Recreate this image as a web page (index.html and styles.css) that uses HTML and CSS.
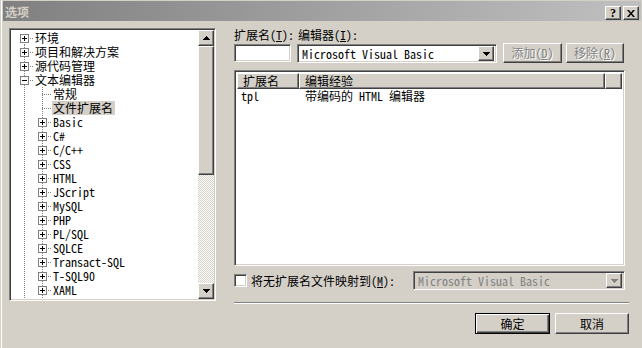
FILE: index.html
```html
<!DOCTYPE html>
<html lang="zh-CN">
<head>
  <meta charset="UTF-8" />
  <title>选项</title>
  <link rel="stylesheet" href="styles.css">
</head>
<body>
  <div class="window">
    <div class="titlebar">
      <span class="title">选项</span>
      <div class="tbtns">
        <span class="tbtn help">?</span>
        <span class="tbtn close">
          <svg width="8" height="7" viewBox="0 0 8 7"><path d="M0 0h2l2 2.4 2-2.4h2l-3 3.5 3 3.5h-2l-2-2.4-2 2.4h-2l3-3.5z"/></svg>
        </span>
      </div>
    </div>

    <div class="client">
      <div class="tree">
        <div class="tree-items">
          <div class="row"><i class="ln f"><b class="pm"></b></i><span class="lbl">环境</span></div>
          <div class="row"><i class="ln t"><b class="pm"></b></i><span class="lbl">项目和解决方案</span></div>
          <div class="row"><i class="ln t"><b class="pm"></b></i><span class="lbl">源代码管理</span></div>
          <div class="row"><i class="ln t"><b class="pm minus"></b></i><span class="lbl">文本编辑器</span></div>
          <div class="row"><i class="ln v"></i><i class="ln t"></i><span class="lbl">常规</span></div>
          <div class="row"><i class="ln v"></i><i class="ln t"></i><span class="lbl sel">文件扩展名</span></div>
          <div class="row"><i class="ln v"></i><i class="ln t"><b class="pm"></b></i><span class="lbl">Basic</span></div>
          <div class="row"><i class="ln v"></i><i class="ln t"><b class="pm"></b></i><span class="lbl">C#</span></div>
          <div class="row"><i class="ln v"></i><i class="ln t"><b class="pm"></b></i><span class="lbl">C/C++</span></div>
          <div class="row"><i class="ln v"></i><i class="ln t"><b class="pm"></b></i><span class="lbl">CSS</span></div>
          <div class="row"><i class="ln v"></i><i class="ln t"><b class="pm"></b></i><span class="lbl">HTML</span></div>
          <div class="row"><i class="ln v"></i><i class="ln t"><b class="pm"></b></i><span class="lbl">JScript</span></div>
          <div class="row"><i class="ln v"></i><i class="ln t"><b class="pm"></b></i><span class="lbl">MySQL</span></div>
          <div class="row"><i class="ln v"></i><i class="ln t"><b class="pm"></b></i><span class="lbl">PHP</span></div>
          <div class="row"><i class="ln v"></i><i class="ln t"><b class="pm"></b></i><span class="lbl">PL/SQL</span></div>
          <div class="row"><i class="ln v"></i><i class="ln t"><b class="pm"></b></i><span class="lbl">SQLCE</span></div>
          <div class="row"><i class="ln v"></i><i class="ln t"><b class="pm"></b></i><span class="lbl">Transact-SQL</span></div>
          <div class="row"><i class="ln v"></i><i class="ln t"><b class="pm"></b></i><span class="lbl">T-SQL90</span></div>
          <div class="row"><i class="ln v"></i><i class="ln t"><b class="pm"></b></i><span class="lbl">XAML</span></div>
          <div class="row"><i class="ln v"></i><i class="ln t"><b class="pm"></b></i><span class="lbl">XML</span></div>
        </div>
        <div class="vscroll">
          <div class="sbtn raised">
            <svg width="7" height="4" viewBox="0 0 7 4"><path d="M3 0h1v1h1v1h1v1h1v1h-7v-1h1v-1h1v-1h1z"/></svg>
          </div>
          <div class="thumb raised"></div>
          <div class="track"></div>
          <div class="sbtn raised">
            <svg width="7" height="4" viewBox="0 0 7 4"><path d="M0 0h7v1h-1v1h-1v1h-1v1h-1v-1h-1v-1h-1v-1h-1z"/></svg>
          </div>
        </div>
      </div>

      <div class="panel">
        <div class="labels">
          <span class="lab-ext">扩展名(<u>T</u>):</span>
          <span>编辑器(<u>I</u>):</span>
        </div>
        <div class="controls">
          <div class="textbox sunken"></div>
          <div class="combo sunken">
            <span class="combo-text">Microsoft Visual Basic</span>
            <span class="drop raised">
              <svg width="7" height="4" viewBox="0 0 7 4"><path d="M0 0h7v1h-1v1h-1v1h-1v1h-1v-1h-1v-1h-1v-1h-1z"/></svg>
            </span>
          </div>
          <div class="btn raised disabled add">添加(<u>D</u>)</div>
          <div class="btn raised disabled remove">移除(<u>R</u>)</div>
        </div>

        <div class="listview sunken">
          <div class="lv-head">
            <div class="hd raised c1">扩展名</div>
            <div class="hd raised c2">编辑经验</div>
            <div class="hd raised c3"></div>
          </div>
          <div class="lv-row">
            <span class="c1">tpl</span>
            <span class="c2">带编码的 HTML 编辑器</span>
          </div>
        </div>

        <div class="maprow">
          <span class="check sunken"></span>
          <span class="map-label">将无扩展名文件映射到(<u>M</u>):</span>
          <div class="combo sunken off">
            <span class="combo-text">Microsoft Visual Basic</span>
            <span class="drop raised">
              <svg width="7" height="4" viewBox="0 0 7 4"><path d="M0 0h7v1h-1v1h-1v1h-1v1h-1v-1h-1v-1h-1v-1h-1z"/></svg>
            </span>
          </div>
        </div>

        <div class="sep"></div>

        <div class="actions">
          <div class="btn default">确定</div>
          <div class="btn raised cancel">取消</div>
        </div>
      </div>
    </div>
  </div>
</body>
</html>
```

FILE: styles.css
```css
body {
  margin: 0;
  background-color: #d4d0c8;
  font-family: "Noto Sans Mono CJK SC", "Noto Sans CJK SC", "Liberation Mono", monospace;
  font-size: 12px;
  color: #000;
}
.window {
  width: 642px;
  height: 348px;
  box-sizing: border-box;
  padding: 1px 1px 0 3px;
  box-shadow: inset 1px 0 #d4d0c8, inset 2px 0 #fff;
  overflow: hidden;
}

/* title bar */
.titlebar {
  height: 20px;
  display: flex;
  align-items: flex-start;
  justify-content: space-between;
  background: linear-gradient(to right, #808080, #c0c0c0);
}
.title {
  margin-left: 2px;
  line-height: 21px;
  font-family: "Noto Sans CJK SC", sans-serif;
  font-weight: bold;
  color: #d4d0c8;
}
.tbtns {
  display: flex;
  gap: 2px;
  margin: 5px 2px 0 0;
}
.tbtn {
  width: 16px;
  height: 14px;
  box-sizing: border-box;
  border: 1px solid;
  border-color: #fff #404040 #404040 #fff;
  box-shadow: inset -1px -1px #808080;
  background-color: #d4d0c8;
  display: flex;
  align-items: center;
  justify-content: center;
}
.help {
  font-family: "Liberation Serif", serif;
  font-weight: bold;
  font-size: 12px;
  line-height: 12px;
}

/* shared 3d edges */
.raised {
  box-sizing: border-box;
  border: 1px solid;
  border-color: #fff #404040 #404040 #fff;
  box-shadow: inset -1px -1px #808080;
  background-color: #d4d0c8;
}
.sunken {
  box-sizing: border-box;
  border: 1px solid;
  border-color: #808080 #fff #fff #808080;
  box-shadow: inset 1px 1px #404040, inset -1px -1px #d4d0c8;
  background-color: #fff;
}

.client {
  display: flex;
  padding: 7px 0 0 6px;
}

/* tree */
.tree {
  width: 207px;
  height: 273px;
  box-sizing: border-box;
  border: 1px solid;
  border-color: #808080 #fff #fff #808080;
  box-shadow: inset 1px 1px #404040, inset -1px -1px #d4d0c8;
  background-color: #fff;
  padding: 1px;
  display: flex;
}
.tree-items {
  flex: 1;
  padding: 1px 0 0 4px;
  overflow: hidden;
}
.row {
  display: flex;
  height: 14px;
  line-height: 14px;
  white-space: nowrap;
}
.ln {
  width: 18px;
  height: 14px;
  flex: none;
  display: flex;
  align-items: flex-start;
}
.ln.v {
  background: repeating-linear-gradient(to bottom, #808080 0 1px, transparent 1px 2px) 9px 0 / 1px 14px no-repeat;
}
.ln.t {
  background:
    repeating-linear-gradient(to right, #808080 0 1px, transparent 1px 2px) 9px 7px / 9px 1px no-repeat,
    repeating-linear-gradient(to bottom, #808080 0 1px, transparent 1px 2px) 9px 0 / 1px 14px no-repeat;
}
.ln.f {
  background:
    repeating-linear-gradient(to right, #808080 0 1px, transparent 1px 2px) 9px 7px / 9px 1px no-repeat,
    repeating-linear-gradient(to bottom, #808080 0 1px, transparent 1px 2px) 9px 7px / 1px 7px no-repeat;
}
.pm {
  width: 9px;
  height: 9px;
  box-sizing: border-box;
  margin: 3px 0 0 5px;
  border: 1px solid #808080;
  background:
    linear-gradient(#000, #000) 1px 3px / 5px 1px no-repeat,
    linear-gradient(#000, #000) 3px 1px / 1px 5px no-repeat,
    #fff;
}
.pm.minus {
  background: linear-gradient(#000, #000) 1px 3px / 5px 1px no-repeat, #fff;
}
.lbl {
  margin-left: 1px;
  padding: 0 2px 0 1px;
}
.lbl.sel {
  background-color: #d4d0c8;
}

.vscroll {
  width: 16px;
  display: flex;
  flex-direction: column;
}
.sbtn {
  height: 16px;
  display: flex;
  align-items: center;
  justify-content: center;
}
.thumb {
  height: 129px;
}
.track {
  flex: 1;
  background: repeating-conic-gradient(#d4d0c8 0 25%, #fff 0 50%) 0 0 / 2px 2px;
}

/* right panel */
.panel {
  width: 395px;
  margin-left: 18px;
}
.labels {
  display: flex;
  height: 14px;
  line-height: 14px;
}
.lab-ext {
  width: 64px;
}
.controls {
  display: flex;
  align-items: flex-start;
  height: 20px;
  margin-top: 1px;
}
.textbox {
  width: 57px;
  height: 18px;
  margin-top: 1px;
}
.combo {
  width: 200px;
  height: 19px;
  margin: 1px 0 0 6px;
  display: flex;
  align-items: center;
  padding: 2px;
}
.combo-text {
  flex: 1;
  padding-left: 2px;
  line-height: 15px;
  white-space: nowrap;
}
.drop {
  width: 16px;
  height: 15px;
  display: flex;
  align-items: center;
  justify-content: center;
}
.btn {
  height: 20px;
  box-sizing: border-box;
  display: flex;
  align-items: center;
  justify-content: center;
  line-height: 14px;
}
.add {
  width: 59px;
  margin-left: 6px;
}
.remove {
  width: 58px;
  margin-left: 4px;
}
.disabled {
  color: #808080;
  text-shadow: 1px 1px #fff;
}

.listview {
  width: 391px;
  height: 196px;
  margin-top: 7px;
  padding: 2px;
}
.lv-head {
  display: flex;
  height: 16px;
}
.hd {
  height: 16px;
  line-height: 14px;
  padding-left: 5px;
}
.hd.c1 { width: 62px; }
.hd.c2 { width: 306px; }
.hd.c3 { flex: 1; }
.lv-row {
  display: flex;
  height: 13px;
  line-height: 13px;
}
.lv-row .c1 {
  width: 62px;
  padding-left: 4px;
  box-sizing: border-box;
}
.lv-row .c2 {
  padding-left: 6px;
}

.maprow {
  display: flex;
  align-items: center;
  height: 19px;
  margin-top: 5px;
}
.check {
  width: 13px;
  height: 13px;
}
.map-label {
  margin-left: 4px;
}
.combo.off {
  width: 212px;
  margin: 0 4px 0 auto;
  background-color: #d4d0c8;
  color: #808080;
}
.combo.off .drop svg {
  fill: #808080;
}

.sep {
  height: 0;
  margin-top: 12px;
  border-top: 1px solid #808080;
  border-bottom: 1px solid #fff;
}

.actions {
  display: flex;
  justify-content: flex-end;
  gap: 5px;
  margin-top: 9px;
}
.actions .btn {
  height: 21px;
}
.default {
  width: 75px;
  border: 1px solid #000;
  box-shadow: inset 1px 1px #fff, inset -1px -1px #404040, inset -2px -2px #808080;
}
.cancel {
  width: 74px;
}
```
